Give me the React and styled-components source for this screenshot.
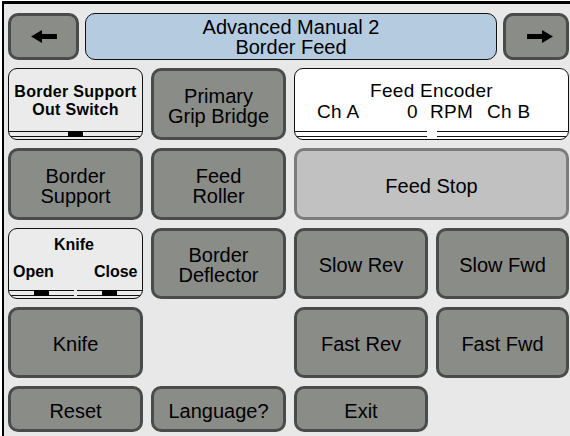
import React from 'react'
import styled, { createGlobalStyle } from 'styled-components'

const GlobalStyle = createGlobalStyle`
  html, body { margin: 0; padding: 0; background: #fff; }
  body { font-family: "Liberation Sans", Arial, sans-serif; color: #000; }
  * { box-sizing: border-box; }
`

const Screen = styled.div`
  margin: 1px 0 0 2px;
  height: 435px;
  border-top: 3px solid #000;
  border-left: 2px solid #000;
  background: #e8e8e8;
  padding: 9px 0 0 4px;
  overflow: hidden;
`

const Header = styled.div`
  display: flex;
  height: 47px;
  gap: 6px;
`

const NavButton = styled.button`
  width: ${p => p.$w}px;
  height: 100%;
  margin: 0;
  padding: 0 0 0 ${p => p.$shift || 0}px;
  background: #8a8c88;
  border: 3px solid #4b4b4b;
  border-radius: 10px;
  display: flex;
  align-items: center;
  justify-content: center;
`

const Title = styled.div`
  width: 412px;
  background: #b5cbe0;
  border: 1px solid #111;
  border-radius: 10px;
  display: flex;
  flex-direction: column;
  align-items: center;
  justify-content: center;
  font-size: 20px;
  line-height: 20px;
  padding-top: 1px;
`

const Grid = styled.div`
  margin-top: 8px;
  display: grid;
  grid-template-columns: 135px 135px 134px 133px;
  grid-template-rows: 72px 72px 71px 71px 46px;
  column-gap: 8px;
  row-gap: 8px;
`

const Button = styled.div`
  grid-column: ${p => p.$span ? `span ${p.$span}` : 'auto'};
  background: ${p => p.$light ? '#c1c1c1' : '#8a8c88'};
  border: 3px solid ${p => p.$light ? '#7c7c7c' : '#4b4b4b'};
  border-radius: 10px;
  display: flex;
  align-items: center;
  justify-content: center;
  text-align: center;
  font-size: 20px;
  line-height: 20px;
  padding-top: 3px;
`

const Blank = styled.div``

const Panel = styled.div`
  grid-column: ${p => p.$span ? `span ${p.$span}` : 'auto'};
  background: ${p => p.$white ? '#fff' : '#ebebeb'};
  border: 1px solid #111;
  border-radius: 9px;
  display: flex;
  flex-direction: column;
  overflow: hidden;
`

const PanelText = styled.div`
  flex: 1;
  text-align: center;
  font-size: 16px;
  font-weight: bold;
  line-height: 18px;
  letter-spacing: 0.3px;
  padding-top: 14px;
`

const KnifeText = styled.div`
  flex: 1;
  font-size: 16px;
  font-weight: bold;
  line-height: 16px;
  padding: 8px 6px 0 4px;
  display: grid;
  grid-template-columns: 1fr auto 1fr;
  grid-template-rows: auto auto;
  span:nth-child(1) { grid-column: 2; text-align: center; }
  span:nth-child(2) { grid-column: 1 / 2; grid-row: 2; }
  span:nth-child(3) { grid-column: 3 / 4; grid-row: 2; text-align: right; }
`

const EncoderText = styled.div`
  flex: 1;
  font-size: 19px;
  line-height: 21px;
  letter-spacing: 0.3px;
  padding-top: 11px;
`

const EncoderTitle = styled.div`
  text-align: center;
`

const EncoderRow = styled.div`
  display: flex;
  padding-left: 22px;
  span:nth-child(1) { width: 90px; }
  span:nth-child(2) { width: 23px; text-align: left; }
  span:nth-child(3) { width: 57px; }
`

const Track = styled.div`
  display: flex;
  height: 6px;
  margin-bottom: 2px;
`

const Rail = styled.div`
  flex: 1;
  border-top: 1px solid #111;
  border-bottom: 1px solid #111;
`

const Block = styled.div`
  width: 15px;
  background: #000;
`

const Gap = styled.div`
  width: ${p => p.$w}px;
`

const Arrow = ({ dir }) => (
  <svg width="26" height="13" viewBox="0 0 26 13" style={{ transform: dir === 'right' ? 'scaleX(-1)' : 'none' }}>
    <polygon points="0,6.5 11,0 11,4 26,4 26,9 11,9 11,13" fill="#000" />
  </svg>
)

export default function App() {
  return (
    <>
      <GlobalStyle />
      <Screen>
        <Header>
          <NavButton $w={71}><Arrow dir="left" /></NavButton>
          <Title>
            <div>Advanced Manual 2</div>
            <div>Border Feed</div>
          </Title>
          <NavButton $w={66} $shift={8}><Arrow dir="right" /></NavButton>
        </Header>
        <Grid>
          <Panel>
            <PanelText>Border Support<br />Out Switch</PanelText>
            <Track><Rail /><Block /><Rail /></Track>
          </Panel>
          <Button>Primary<br />Grip Bridge</Button>
          <Panel $span={2} $white>
            <EncoderText>
              <EncoderTitle>Feed Encoder</EncoderTitle>
              <EncoderRow>
                <span>Ch A</span>
                <span>0</span>
                <span>RPM</span>
                <span>Ch B</span>
              </EncoderRow>
            </EncoderText>
            <Track><Rail /><Gap $w={10} /><Rail /></Track>
          </Panel>

          <Button>Border<br />Support</Button>
          <Button>Feed<br />Roller</Button>
          <Button $span={2} $light>Feed Stop</Button>

          <Panel>
            <KnifeText>
              <span>Knife</span>
              <span>Open</span>
              <span>Close</span>
            </KnifeText>
            <Track><Rail /><Block /><Rail /><Gap $w={3} /><Rail /><Block /><Rail /></Track>
          </Panel>
          <Button>Border<br />Deflector</Button>
          <Button>Slow Rev</Button>
          <Button>Slow Fwd</Button>

          <Button>Knife</Button>
          <Blank />
          <Button>Fast Rev</Button>
          <Button>Fast Fwd</Button>

          <Button>Reset</Button>
          <Button>Language?</Button>
          <Button>Exit</Button>
          <Blank />
        </Grid>
      </Screen>
    </>
  )
}
